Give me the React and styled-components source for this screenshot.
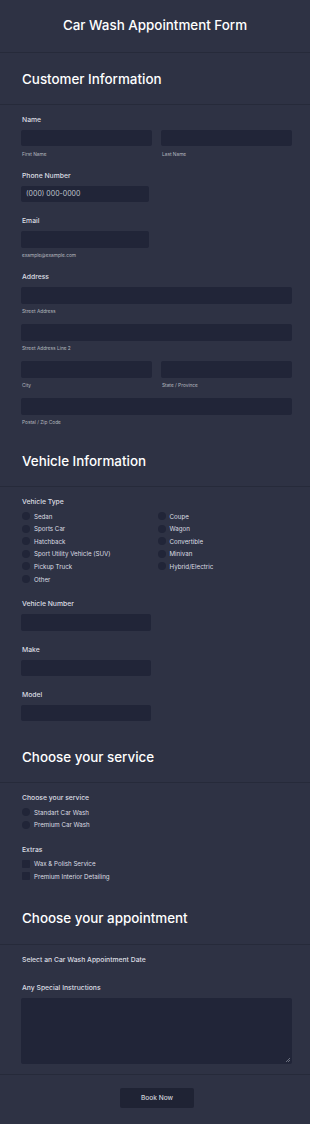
import React from 'react';
import styled, { createGlobalStyle } from 'styled-components';

const GlobalStyle = createGlobalStyle`
  html, body { margin: 0; padding: 0; background: #2e3244; }
  body { font-family: Inter, "Noto Sans", sans-serif; color: #e6e8ee; }
  * { box-sizing: border-box; }
`;

const colors = {
  bg: '#2e3244',
  line: '#262a3a',
  field: '#212538',
  label: '#dcdee3',
  sub: '#b4b7bf',
};

// 상단 타이틀
const Page = styled.div`
  width: 310px;
  min-height: 1124px;
  background: ${colors.bg};
`;

const FormHeader = styled.header`
  height: 53px;
  display: flex;
  align-items: center;
  justify-content: center;
  border-bottom: 1px solid ${colors.line};
  h1 { margin: 0 0 2px; font-size: 13.4px; font-weight: 500; color: #fff; }
`;

const SectionTitle = styled.h2`
  margin: 0;
  height: 52px;
  display: flex;
  align-items: center;
  padding: 0 18px 0 22px;
  font-size: 13.4px;
  font-weight: 500;
  color: #fff;
  border-bottom: 1px solid ${colors.line};
`;

const Body = styled.div`
  padding: 10px 18px 10px 21px;
  display: flex;
  flex-direction: column;
  gap: 14px;
`;

const Field = styled.div`
  display: flex;
  flex-direction: column;
`;

const Label = styled.div`
  font-size: 6.8px;
  font-weight: 500;
  line-height: 10px;
  color: ${colors.label};
  margin-left: 1px;
  margin-bottom: 4.8px;
`;

const Input = styled.div`
  height: 16.6px;
  width: ${p => p.$w || '100%'};
  background: ${colors.field};
  border-radius: 2px;
  font-size: 7px;
  color: #bfc3cd;
  display: flex;
  align-items: center;
  padding-left: 5px;
`;

const Sub = styled.div`
  font-size: 4.8px;
  line-height: 6px;
  color: ${colors.sub};
  margin: 4.5px 0 0 1px;
`;

const Row = styled.div`
  display: grid;
  grid-template-columns: 1fr 1fr;
  gap: 9px;
`;

const AddressStack = styled.div`
  display: flex;
  flex-direction: column;
  gap: 10px;
`;

const OptionGrid = styled.div`
  display: grid;
  grid-template-columns: ${p => (p.$cols === 2 ? '1fr 1fr' : '1fr')};
  grid-auto-flow: ${p => (p.$cols === 2 ? 'column' : 'row')};
  grid-template-rows: ${p => (p.$cols === 2 ? 'repeat(6, 12.6px)' : 'none')};
  grid-auto-rows: 12.6px;
  margin-top: -2.4px;
`;

const Option = styled.div`
  display: flex;
  align-items: center;
  gap: 4px;
  font-size: 6.2px;
  color: ${colors.label};
  padding-left: 1px;
  &::before {
    content: "";
    width: 8px;
    height: 8px;
    flex-shrink: 0;
    background: ${colors.field};
    border-radius: ${p => (p.$box ? '1px' : '50%')};
  }
`;

const TextArea = styled.div`
  position: relative;
  height: 66px;
  background: ${colors.field};
  border-radius: 2px;
`;

const Grip = styled.svg`
  position: absolute;
  right: 2px;
  bottom: 2px;
`;

const Footer = styled.div`
  border-top: 1px solid ${colors.line};
  padding: 13px 0;
  display: flex;
  justify-content: center;
`;

const SubmitButton = styled.button`
  width: 74px;
  height: 19.5px;
  margin-left: 4px;
  background: #1f2334;
  border: none;
  border-radius: 2px;
  color: #cfd2da;
  font-family: Inter, sans-serif;
  font-size: 6.6px;
  font-weight: 500;
`;

const leftTypes = ['Sedan', 'Sports Car', 'Hatchback', 'Sport Utility Vehicle (SUV)', 'Pickup Truck', 'Other'];
const rightTypes = ['Coupe', 'Wagon', 'Convertible', 'Minivan', 'Hybrid/Electric'];

export default function App() {
  return (
    <Page>
      <GlobalStyle />
      <FormHeader><h1>Car Wash Appointment Form</h1></FormHeader>

      <SectionTitle>Customer Information</SectionTitle>
      <Body>
        <Field>
          <Label>Name</Label>
          <Row>
            <div><Input /><Sub>First Name</Sub></div>
            <div><Input /><Sub>Last Name</Sub></div>
          </Row>
        </Field>
        <Field>
          <Label>Phone Number</Label>
          <Input $w="128px">(000) 000-0000</Input>
        </Field>
        <Field>
          <Label>Email</Label>
          <Input $w="128px" />
          <Sub>example@example.com</Sub>
        </Field>
        <Field>
          <Label>Address</Label>
          <AddressStack>
            <div><Input /><Sub>Street Address</Sub></div>
            <div><Input /><Sub>Street Address Line 2</Sub></div>
            <Row>
              <div><Input /><Sub>City</Sub></div>
              <div><Input /><Sub>State / Province</Sub></div>
            </Row>
            <div><Input /><Sub>Postal / Zip Code</Sub></div>
          </AddressStack>
        </Field>
      </Body>

      <SectionTitle>Vehicle Information</SectionTitle>
      <Body>
        <Field>
          <Label>Vehicle Type</Label>
          <OptionGrid $cols={2}>
            {leftTypes.map(t => <Option key={t}>{t}</Option>)}
            {rightTypes.map(t => <Option key={t}>{t}</Option>)}
          </OptionGrid>
        </Field>
        <Field>
          <Label>Vehicle Number</Label>
          <Input $w="130px" />
        </Field>
        <Field>
          <Label>Make</Label>
          <Input $w="130px" />
        </Field>
        <Field>
          <Label>Model</Label>
          <Input $w="130px" />
        </Field>
      </Body>

      <SectionTitle>Choose your service</SectionTitle>
      <Body>
        <Field>
          <Label>Choose your service</Label>
          <OptionGrid>
            <Option>Standart Car Wash</Option>
            <Option>Premium Car Wash</Option>
          </OptionGrid>
        </Field>
        <Field>
          <Label>Extras</Label>
          <OptionGrid>
            <Option $box>Wax &amp; Polish Service</Option>
            <Option $box>Premium Interior Detailing</Option>
          </OptionGrid>
        </Field>
      </Body>

      <SectionTitle>Choose your appointment</SectionTitle>
      <Body>
        <Field>
          <Label>Select an Car Wash Appointment Date</Label>
        </Field>
        <Field>
          <Label>Any Special Instructions</Label>
          <TextArea>
            <Grip width="4" height="4" viewBox="0 0 4 4">
              <path d="M4 0L0 4M4 2L2 4" stroke="#8a8f9c" strokeWidth="0.7" />
            </Grip>
          </TextArea>
        </Field>
      </Body>

      <Footer>
        <SubmitButton>Book Now</SubmitButton>
      </Footer>
    </Page>
  );
}
